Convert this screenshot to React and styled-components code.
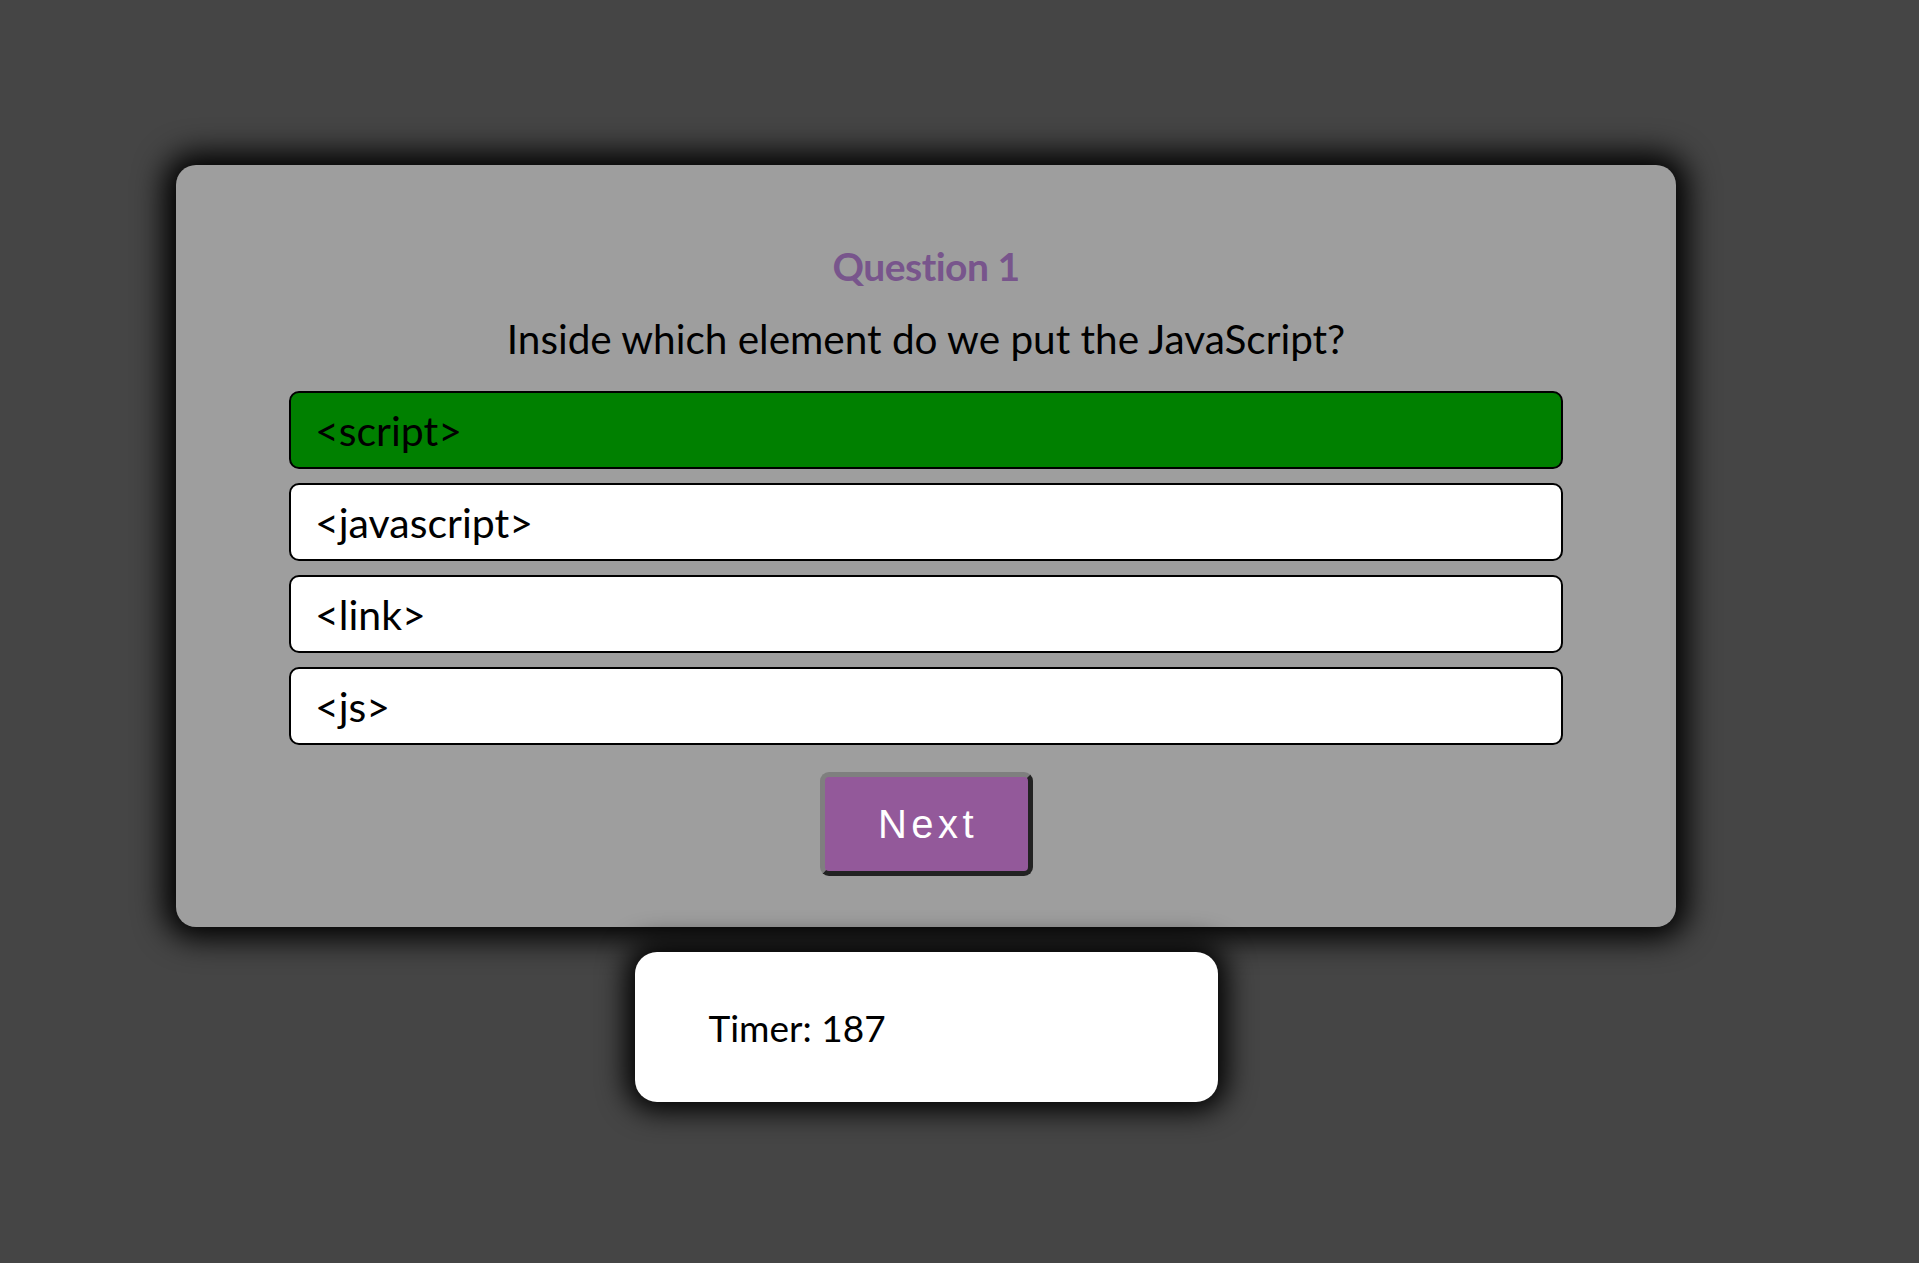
import React from "react";
import styled, { createGlobalStyle } from "styled-components";

const Global = createGlobalStyle`
  html, body { margin: 0; padding: 0; background: #454545; }
  body { font-family: Lato, "Open Sans", sans-serif; min-height: 1263px; }
`;

const Page = styled.main`
  width: 1500px;
  padding: 165px 0 40px 176px;
  display: flex;
  flex-direction: column;
  align-items: center;
`;

const Card = styled.section`
  width: 100%;
  box-sizing: border-box;
  background: #9e9e9e;
  border-radius: 20px;
  box-shadow: 0 0 30px 12px #000;
  padding: 77px 0 51px;
  display: flex;
  flex-direction: column;
  align-items: center;
`;

const Title = styled.h2`
  margin: 0;
  font-family: Lato, sans-serif;
  font-weight: 700;
  font-size: 39px;
  line-height: 48px;
  color: #78558c;
  letter-spacing: -0.5px;
`;

const Prompt = styled.p`
  margin: 24px 0 27px;
  font-family: Lato, sans-serif;
  font-size: 40.5px;
  line-height: 50px;
  color: #000;
`;

const Options = styled.ul`
  list-style: none;
  margin: 0;
  padding: 0;
  width: 1274px;
  display: flex;
  flex-direction: column;
  gap: 14px;
`;

const Option = styled.li`
  box-sizing: border-box;
  height: 78px;
  border: 2px solid #000;
  border-radius: 10px;
  background: ${(p) => (p.$correct ? "#008000" : "#ffffff")};
  padding: 0 24px;
  display: flex;
  align-items: center;
  font-family: Lato, sans-serif;
  font-size: 41px;
  color: #000;
`;

const NextButton = styled.button`
  margin-top: 27px;
  box-sizing: border-box;
  width: 213px;
  height: 104px;
  background: #93599a;
  border-style: solid;
  border-width: 5px;
  border-color: #7f7f7f #222 #222 #7f7f7f;
  border-radius: 9px;
  color: #fff;
  font-family: "Liberation Sans", Arial, sans-serif;
  font-size: 40px;
  letter-spacing: 4.5px;
  padding: 0 0 0 4px;
  cursor: pointer;
`;

const TimerBox = styled.div`
  margin-top: 25px;
  box-sizing: border-box;
  width: 583px;
  height: 150px;
  background: #fff;
  border-radius: 22px;
  box-shadow: 0 0 28px 9px #000;
  padding: 0 74px;
  display: flex;
  align-items: center;
  font-family: Lato, sans-serif;
  font-size: 37px;
  color: #000;
`;

const answers = ["<script>", "<javascript>", "<link>", "<js>"];

export default function App() {
  return (
    <>
      <Global />
      <Page>
        <Card>
          <Title>Question 1</Title>
          <Prompt>Inside which element do we put the JavaScript?</Prompt>
          <Options>
            {answers.map((a, i) => (
              <Option key={a} $correct={i === 0}>
                {a}
              </Option>
            ))}
          </Options>
          <NextButton>Next</NextButton>
        </Card>
        <TimerBox>Timer: 187</TimerBox>
      </Page>
    </>
  );
}
